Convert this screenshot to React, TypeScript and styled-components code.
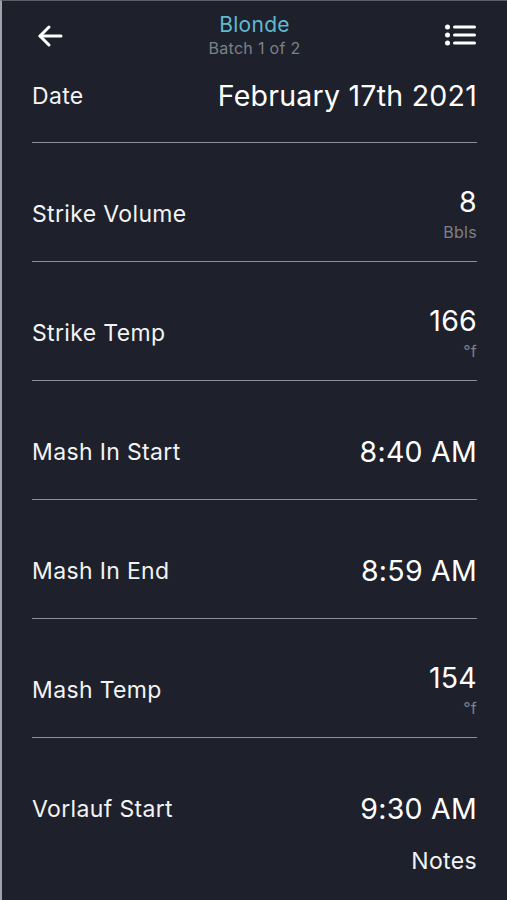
import React from "react";
import styled, { createGlobalStyle } from "styled-components";

const Global = createGlobalStyle`
  html, body { margin: 0; padding: 0; background: #1e212b; }
  body { font-family: Inter, "Noto Sans", sans-serif; -webkit-font-smoothing: antialiased; }
  * { box-sizing: border-box; }
`;

const Screen = styled.div`
  width: 507px;
  height: 900px;
  overflow: hidden;
  background: #1e212b;
  border-top: 1px solid #5b5e66;
  border-left: 2px solid #9fa2a8;
  color: #f4f5f7;
`;

const Header = styled.header`
  height: 71px;
  display: grid;
  grid-template-columns: 80px 1fr 80px;
  align-items: start;
`;

const IconButton = styled.button<{ $align: "left" | "right" }>`
  background: none;
  border: 0;
  padding: 0;
  margin-top: ${(p) => (p.$align === "left" ? "22px" : "23px")};
  height: 26px;
  display: flex;
  justify-content: ${(p) => (p.$align === "left" ? "flex-start" : "flex-end")};
  padding-left: ${(p) => (p.$align === "left" ? "35px" : "0")};
  padding-right: ${(p) => (p.$align === "right" ? "31px" : "0")};
  color: #ffffff;
`;

const TitleBlock = styled.div`
  display: flex;
  flex-direction: column;
  align-items: center;
  padding-top: 11px;
`;

const Title = styled.div`
  font-size: 21px;
  line-height: 26px;
  letter-spacing: 0.3px;
  color: #5fb9d2;
`;

const Subtitle = styled.div`
  font-size: 16px;
  line-height: 20px;
  letter-spacing: 0.3px;
  color: #7d8087;
`;

const List = styled.div`
  padding: 0 30px 0 30px;
`;

const Row = styled.div<{ $first?: boolean; $last?: boolean }>`
  display: flex;
  justify-content: space-between;
  align-items: center;
  height: ${(p) => (p.$first ? "71px" : p.$last ? "95px" : "119px")};
  padding-top: ${(p) => (p.$first ? "0" : "47px")};
  padding-bottom: ${(p) => (p.$first ? "22px" : p.$last ? "0" : "23px")};
  border-bottom: ${(p) => (p.$last ? "none" : "1px solid #8b8e95")};
`;

const Label = styled.div`
  font-size: 23px;
  line-height: 48px;
  letter-spacing: 0.35px;
  color: #f2f3f5;
`;

const ValueBlock = styled.div`
  display: flex;
  flex-direction: column;
  align-items: flex-end;
`;

const Value = styled.div`
  font-size: 28.5px;
  line-height: 30px;
  letter-spacing: 0.25px;
  color: #ffffff;
`;

const Unit = styled.div`
  font-size: 16px;
  line-height: 18px;
  margin-top: 6px;
  letter-spacing: 0.3px;
  color: #7d8087;
`;

const NotesRow = styled.div`
  display: flex;
  justify-content: flex-end;
  margin-top: 15px;
  font-size: 23px;
  line-height: 26px;
  letter-spacing: 0.35px;
  color: #f2f3f5;
`;

const BackIcon = () => (
  <svg width="26" height="26" viewBox="0 0 26 26" fill="none" stroke="currentColor" strokeWidth="3" strokeLinecap="round" strokeLinejoin="round">
    <path d="M24 13H3" />
    <path d="M12 4L3 13L12 22" />
  </svg>
);

const ListIcon = () => (
  <svg width="31" height="22" viewBox="0 0 31 22" fill="currentColor">
    <circle cx="2.5" cy="3" r="2.5" />
    <circle cx="2.5" cy="11" r="2.5" />
    <circle cx="2.5" cy="19" r="2.5" />
    <rect x="8" y="1.5" width="23" height="3" rx="1.5" />
    <rect x="8" y="9.5" width="23" height="3" rx="1.5" />
    <rect x="8" y="17.5" width="23" height="3" rx="1.5" />
  </svg>
);

type Item = { label: string; value: string; unit?: string };

const items: Item[] = [
  { label: "Strike Volume", value: "8", unit: "Bbls" },
  { label: "Strike Temp", value: "166", unit: "°f" },
  { label: "Mash In Start", value: "8:40 AM" },
  { label: "Mash In End", value: "8:59 AM" },
  { label: "Mash Temp", value: "154", unit: "°f" },
  { label: "Vorlauf Start", value: "9:30 AM" },
];

export default function App() {
  return (
    <>
      <Global />
      <Screen>
        <Header>
          <IconButton $align="left" aria-label="Back">
            <BackIcon />
          </IconButton>
          <TitleBlock>
            <Title>Blonde</Title>
            <Subtitle>Batch 1 of 2</Subtitle>
          </TitleBlock>
          <IconButton $align="right" aria-label="Batches">
            <ListIcon />
          </IconButton>
        </Header>
        <List>
          <Row $first>
            <Label>Date</Label>
            <Value>February 17th 2021</Value>
          </Row>
          {items.map((it, i) => (
            <Row key={it.label} $last={i === items.length - 1}>
              <Label>{it.label}</Label>
              {it.unit ? (
                <ValueBlock>
                  <Value>{it.value}</Value>
                  <Unit>{it.unit}</Unit>
                </ValueBlock>
              ) : (
                <Value>{it.value}</Value>
              )}
            </Row>
          ))}
          <NotesRow>Notes</NotesRow>
        </List>
      </Screen>
    </>
  );
}
